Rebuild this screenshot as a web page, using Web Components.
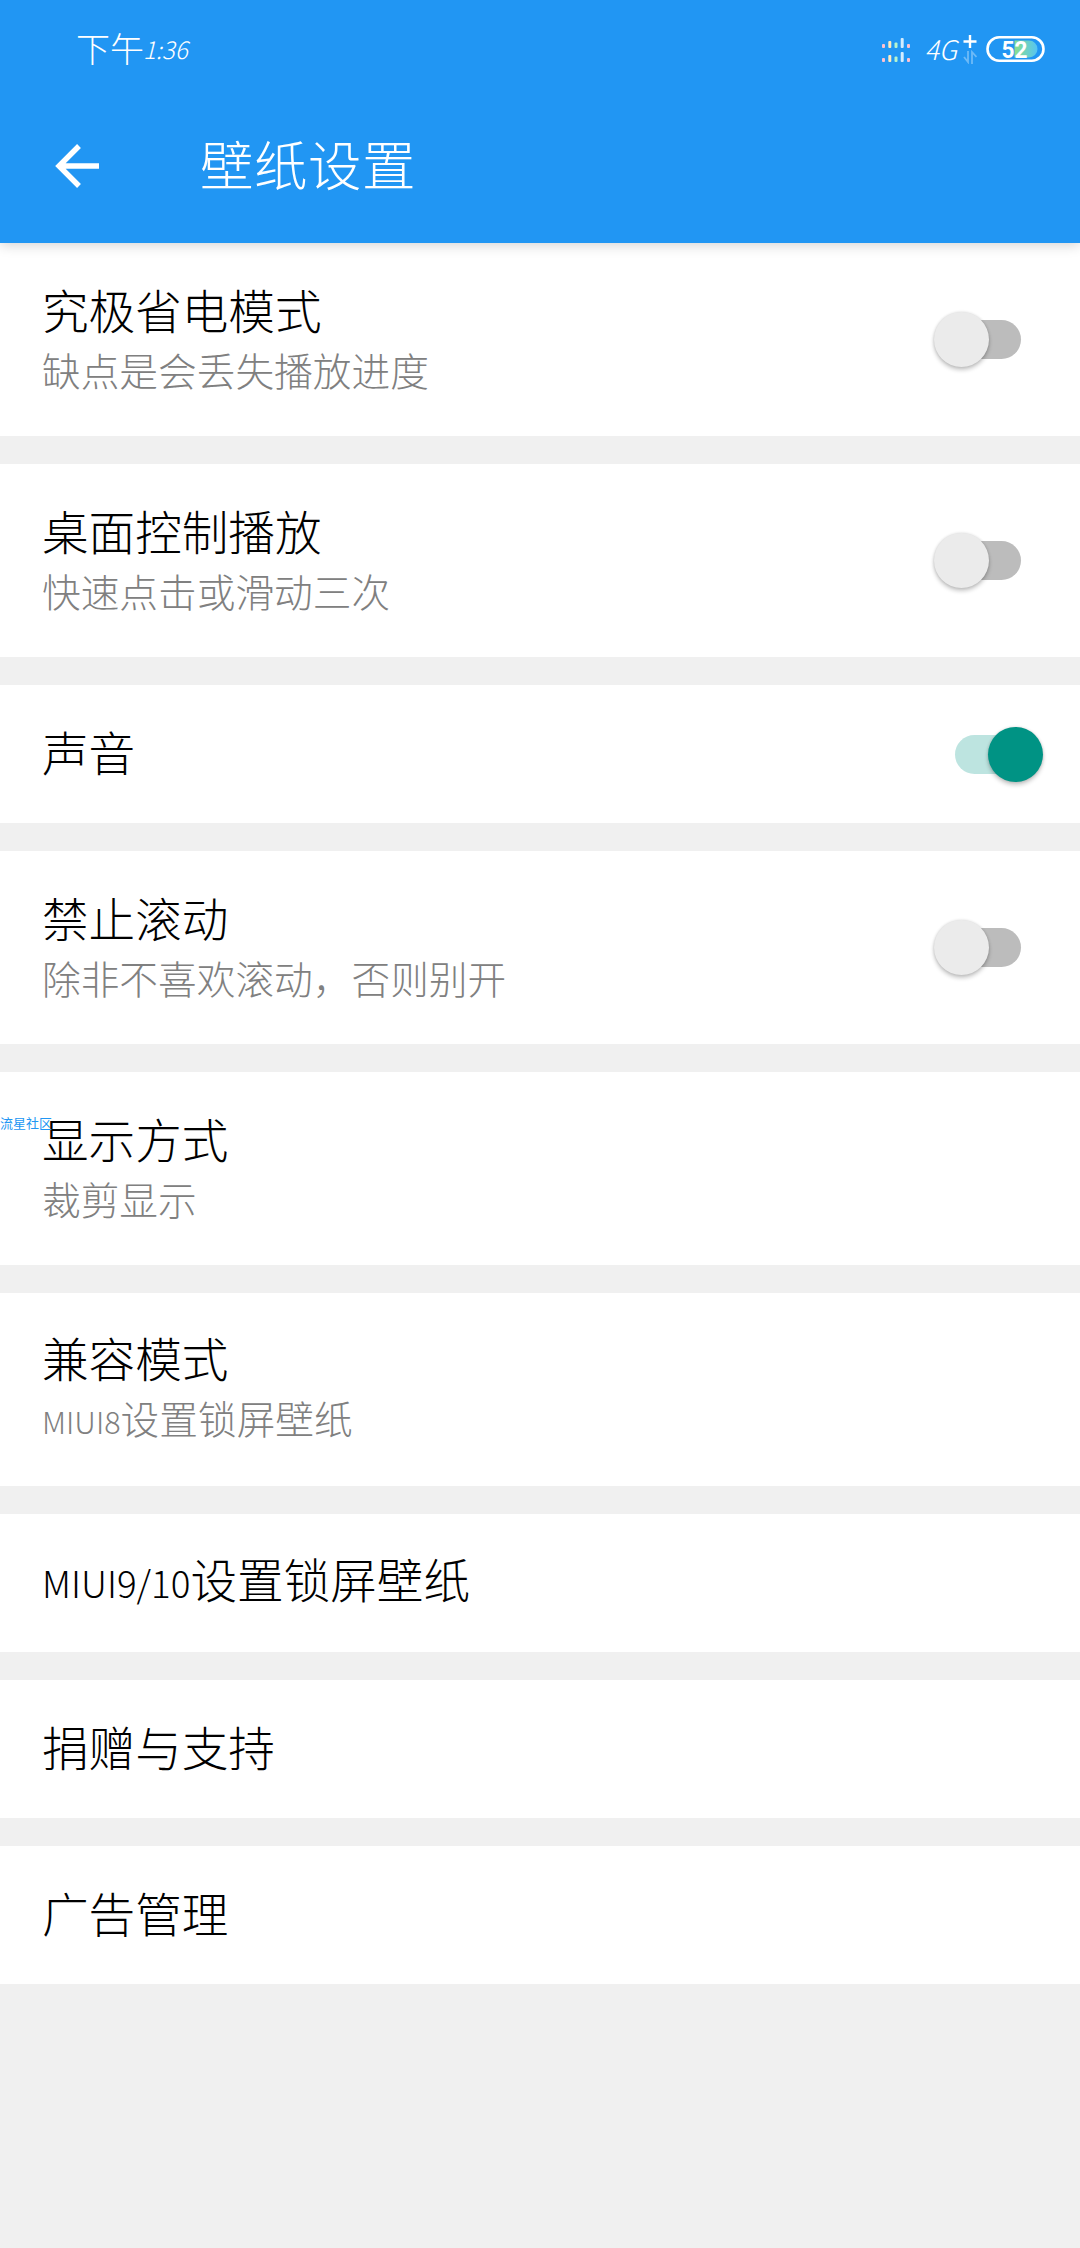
<!DOCTYPE html>
<html lang="zh-CN">
<head>
<meta charset="utf-8">
<title>壁纸设置</title>
<style>
    body {
        margin: 0;
        background: #f0f0f0;
        font-family: "Noto Sans CJK SC", sans-serif;
        font-weight: 300;
        color: #000;
    }
</style>
</head>
<body>
<settings-page>
    <status-bar slot="top" time="1:36" battery="52">下午</status-bar>
    <app-bar slot="top">壁纸设置</app-bar>

    <setting-row toggle="off">究极省电模式<span slot="summary">缺点是会丢失播放进度</span></setting-row>
    <setting-row toggle="off">桌面控制播放<span slot="summary">快速点击或滑动三次</span></setting-row>
    <setting-row toggle="on">声音</setting-row>
    <setting-row toggle="off">禁止滚动<span slot="summary">除非不喜欢滚动，否则别开</span></setting-row>
    <setting-row>显示方式<span slot="summary">裁剪显示</span></setting-row>
    <setting-row>兼容模式<span slot="summary"><latin-text>MIUI8</latin-text>设置锁屏壁纸</span></setting-row>
    <setting-row><latin-text>MIUI9/10</latin-text>设置锁屏壁纸</setting-row>
    <setting-row>捐赠与支持</setting-row>
    <setting-row>广告管理</setting-row>

    <water-mark slot="overlay">流星社区</water-mark>
</settings-page>

<script>
class SettingsPage extends HTMLElement {
    constructor() {
        super();
        this.attachShadow({ mode: "open" }).innerHTML = `
            <style>
                :host {
                    display: block;
                    position: relative;
                    height: 2248px;
                    overflow: hidden;
                }
                header {
                    position: relative;
                    height: 243px;
                    background: #2196f3;
                    box-shadow: 0 2px 12px rgba(0, 0, 0, 0.18);
                }
                main {
                    display: flex;
                    flex-direction: column;
                    gap: 28px;
                }
            </style>
            <header><slot name="top"></slot></header>
            <main><slot></slot></main>
            <slot name="overlay"></slot>
`;
    }
}
customElements.define("settings-page", SettingsPage);

class StatusBar extends HTMLElement {
    constructor() {
        super();
        this.attachShadow({ mode: "open" });
    }
    connectedCallback() {
        this.render();
    }

    // two rows of small signal bars, one colour per column
    signalBars() {
        const cols = [
            [0, 4, "#ffc1d0"],
            [6.3, 7, "#ffeac0"],
            [12.5, 5.5, "#b5f5cf"],
            [18.7, 10, "#d3ecff"],
            [25, 4, "#ffc1d0"]
        ];
        return [12, 26].map(bottom => cols.map(([x, h, fill]) =>
            `<rect x="${x}" y="${bottom - h}" width="3" height="${h}" rx="1" fill="${fill}"/>`
        ).join("")).join("");
    }
    render() {
        this.shadowRoot.innerHTML = `
            <style>
                :host {
                    display: flex;
                    align-items: center;
                    height: 98px;
                    padding: 0 34px 0 76px;
                    color: #fff;
                }
                .clock {
                    flex: 1;
                    display: flex;
                    align-items: center;
                    font-size: 34px;
                    line-height: 40px;
                    margin-top: -2px;
                }
                .digits {
                    font-size: 24px;
                    font-style: italic;
                    margin: 2px 0 0 -1px;
                }
                .net {
                    font-size: 27px;
                    line-height: 30px;
                    font-style: italic;
                    margin: 0 6px 0 14px;
                }
                svg {
                    display: block;
                }
                .bars {
                    margin-top: 2px;
                }
                .battery {
                    margin-left: 9px;
                }
            </style>
            <div class="clock"><slot></slot><span class="digits">${this.getAttribute("time")}</span></div>
            <svg class="bars" width="28" height="28">${this.signalBars()}</svg>
            <span class="net">4G</span>
            <svg width="14" height="30" fill="none" stroke="#fff">
                <path d="M0.5 7.5H13.5M7 1V14" stroke-width="2.4"/>
                <path d="M1 23L5 28V17M9 30V18L13.5 23" stroke-width="1.8" opacity="0.35"/>
            </svg>
            <svg class="battery" width="60" height="28">
                <defs>
                    <linearGradient id="charge">
                        <stop offset="0" stop-color="#8be08c"/>
                        <stop offset="1" stop-color="#55c4f4"/>
                    </linearGradient>
                </defs>
                <rect x="1.5" y="2.3" width="56" height="23.4" rx="11.7" fill="none" stroke="#fff" stroke-width="2.6"/>
                <path d="M28.5 5.5H43a8.5 8.5 0 0 1 0 17H28.5Z" fill="url(#charge)"/>
                <text x="28.5" y="22.5" text-anchor="middle" textLength="26" lengthAdjust="spacingAndGlyphs" font-family="Roboto, sans-serif" font-weight="700" font-size="24" fill="#fff">${this.getAttribute("battery")}</text>
            </svg>
`;
    }
}
customElements.define("status-bar", StatusBar);

class AppBar extends HTMLElement {
    constructor() {
        super();
        this.attachShadow({ mode: "open" }).innerHTML = `
            <style>
                :host {
                    display: flex;
                    align-items: center;
                    height: 136px;
                    padding-left: 55px;
                    color: #fff;
                    font-size: 53.5px;
                    letter-spacing: 0.5px;
                    line-height: 60px;
                }
                h1 {
                    margin: -6px 0 0 101px;
                    font: inherit;
                }
            </style>
            <svg width="44" height="44" fill="none" stroke="#fff" stroke-width="5.4">
                <path d="M44 22H4M24 2L4 22L24 42"/>
            </svg>
            <h1><slot></slot></h1>
`;
    }
}
customElements.define("app-bar", AppBar);

class SettingRow extends HTMLElement {
    constructor() {
        super();
        this.attachShadow({ mode: "open" });
    }
    connectedCallback() {
        this.render();
    }
    render() {
        const toggle = this.getAttribute("toggle");
        const summary = this.querySelector("[slot=summary]");
        this.shadowRoot.innerHTML = `
            <style>
                :host {
                    display: flex;
                    align-items: center;
                    box-sizing: border-box;
                    height: ${summary ? 193 : 138}px;
                    padding-left: 42px;
                    background: #fff;
                }
                .texts {
                    flex: 1;
                    margin-top: ${summary ? 0 : -7}px;
                }
                .title {
                    font-size: 46.6px;
                    line-height: 56px;
                }
                .summary {
                    font-size: 38.7px;
                    line-height: 58px;
                    color: #808080;
                    margin: 3px 0 0;
                }
            </style>
            <div class="texts">
                <div class="title"><slot></slot></div>
                ${summary ? `<div class="summary"><slot name="summary"></slot></div>` : ""}
            </div>
            ${toggle ? `<toggle-switch state="${toggle}"></toggle-switch>` : ""}
`;
    }
}
customElements.define("setting-row", SettingRow);

class ToggleSwitch extends HTMLElement {
    constructor() {
        super();
        this.attachShadow({ mode: "open" }).innerHTML = `
            <style>
                :host {
                    display: flex;
                    align-items: center;
                    width: 81px;
                    height: 39px;
                    margin-right: 59px;
                    border-radius: 20px;
                    background: #bcbcbc;
                }
                .thumb {
                    flex: none;
                    width: 55px;
                    height: 55px;
                    margin: 0 -6.5px;
                    border-radius: 50%;
                    background: #ebebeb;
                    box-shadow: 0 3px 4px rgba(0, 0, 0, 0.22), 0 0 3px rgba(0, 0, 0, 0.14);
                }
                :host([state="on"]) {
                    justify-content: flex-end;
                    margin-right: 44px;
                    background: #bde4e0;
                }
                :host([state="on"]) .thumb {
                    background: #009384;
                }
            </style>
            <div class="thumb"></div>
`;
    }
}
customElements.define("toggle-switch", ToggleSwitch);

// latin runs are set smaller than the chinese text around them
class LatinText extends HTMLElement {
    constructor() {
        super();
        // no whitespace around the slot, it would show up inside the line
        this.attachShadow({ mode: "open" }).innerHTML =
            `<style>:host { display: inline; font-size: 0.79em; }</style><slot></slot>`;
    }
}
customElements.define("latin-text", LatinText);

class WaterMark extends HTMLElement {
    constructor() {
        super();
        this.attachShadow({ mode: "open" }).innerHTML = `
            <style>
                :host {
                    position: absolute;
                    left: 0;
                    top: 1114px;
                    font-size: 13px;
                    font-weight: 400;
                    line-height: 18px;
                    color: #2196f3;
                }
            </style>
            <slot></slot>
`;
    }
}
customElements.define("water-mark", WaterMark);
</script>
</body>
</html>
